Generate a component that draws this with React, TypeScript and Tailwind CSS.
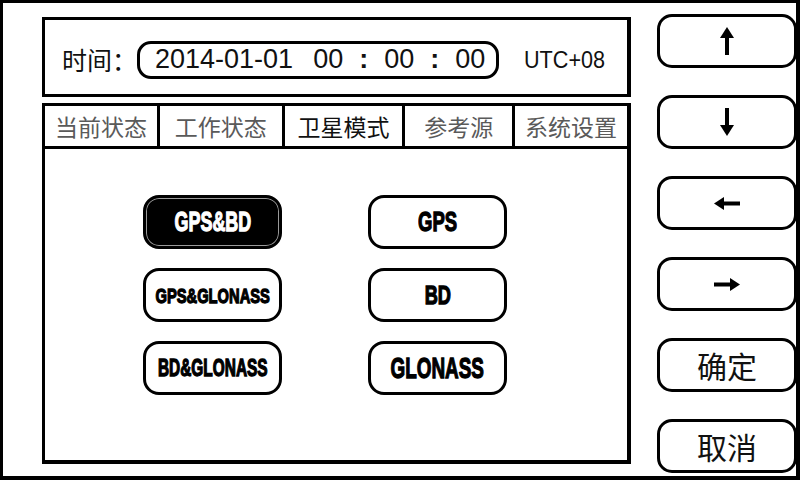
import React from "react";

const tabs = [
  { label: "当前状态", w: "w-[115px] border-r-[3px]", active: false },
  { label: "工作状态", w: "w-[125px] border-r-[3px]", active: false },
  { label: "卫星模式", w: "w-[121px] border-r-[3px]", active: true },
  { label: "参考源", w: "w-[110px] border-r-[3px]", active: false },
  { label: "系统设置", w: "w-[112px]", active: false },
];

const modes = [
  { label: "GPS&BD", cls: "text-[28px] scale-x-[0.64]", active: true },
  { label: "GPS", cls: "text-[28px] scale-x-[0.66]", active: false },
  { label: "GPS&GLONASS", cls: "text-[21px] scale-x-[0.7]", active: false },
  { label: "BD", cls: "text-[26px] scale-x-[0.7]", active: false },
  { label: "BD&GLONASS", cls: "text-[23px] scale-x-[0.67]", active: false },
  { label: "GLONASS", cls: "text-[30px] scale-x-[0.63]", active: false },
];

function ArrowV({ down }: { down?: boolean }) {
  return (
    <svg width="16" height="28" viewBox="0 0 16 28" className={down ? "rotate-180" : ""}>
      <polygon points="8,0 1,11 15,11" fill="#000" />
      <rect x="6" y="9" width="4" height="19" fill="#000" />
    </svg>
  );
}

function ArrowH({ right }: { right?: boolean }) {
  return (
    <svg width="26" height="15" viewBox="0 0 26 15" className={right ? "rotate-180" : ""}>
      <polygon points="0,7.5 10,1 10,14" fill="#000" />
      <rect x="8" y="5.5" width="18" height="4" fill="#000" />
    </svg>
  );
}

function SideButton({ children }: { children: React.ReactNode }) {
  return (
    <div className="h-[54px] w-[140px] rounded-[15px] border-[3px] border-black bg-white flex items-center justify-center">
      {children}
    </div>
  );
}

export default function App() {
  return (
    <div className="w-[800px] h-[480px] bg-white border-l-[3px] border-t-[3px] border-r-[4px] border-b-[4px] border-black box-border flex font-['Noto_Sans_CJK_SC',sans-serif] overflow-hidden">
      {/* Left column */}
      <div className="ml-[39px] mt-[14px] w-[589px] flex flex-col">
        {/* Time panel */}
        <div className="h-[80px] border-[3px] border-r-[4px] border-black flex items-center pl-[17px] pt-[5px]">
          <span className="text-[25px] leading-none text-[#111] w-[75px] whitespace-nowrap">时间：</span>
          <div className="h-[38px] w-[362px] rounded-[14px] border-[3px] border-black flex items-center pl-[15px] font-['Liberation_Sans',sans-serif] text-[27px] leading-none text-[#111]">
            <span>2014-01-01</span>
            <span className="ml-[20px]">00</span>
            <span className="ml-[16px] font-bold">:</span>
            <span className="ml-[16px]">00</span>
            <span className="ml-[16px] font-bold">:</span>
            <span className="ml-[16px]">00</span>
          </div>
          <span className="ml-[25px] inline-block origin-left scale-x-[0.9] font-['Liberation_Sans',sans-serif] text-[24px] leading-none text-[#111]">UTC+08</span>
        </div>

        {/* Tab panel */}
        <div className="mt-[6px] h-[361px] border-[3px] border-r-[4px] border-b-[4px] border-black flex flex-col">
          <div className="h-[43px] border-b-[3px] border-black flex">
            {tabs.map((t) => (
              <div
                key={t.label}
                className={`${t.w} border-black h-full flex items-center justify-center text-[23px] leading-none ${t.active ? "text-[#111]" : "text-[#5a5a5a]"}`}
              >
                {t.label}
              </div>
            ))}
          </div>
          <div className="pt-[46px] pl-[98px] grid grid-cols-[139px_139px] gap-x-[86px] gap-y-[19px]">
            {modes.map((m) => (
              <div
                key={m.label}
                className={`h-[54px] rounded-[16px] border-[3px] border-black flex items-center justify-center ${m.active ? "bg-black shadow-[inset_0_0_0_1px_#9a9a9a]" : "bg-white"}`}
              >
                <span
                  className={`inline-block font-['Liberation_Sans',sans-serif] font-bold leading-none whitespace-nowrap [-webkit-text-stroke:1.3px] ${m.cls} ${m.active ? "text-white" : "text-black"}`}
                >
                  {m.label}
                </span>
              </div>
            ))}
          </div>
        </div>
      </div>

      {/* Right column */}
      <div className="ml-[26px] mt-[11px] flex flex-col gap-[27px]">
        <SideButton>
          <ArrowV />
        </SideButton>
        <SideButton>
          <ArrowV down />
        </SideButton>
        <SideButton>
          <ArrowH />
        </SideButton>
        <SideButton>
          <ArrowH right />
        </SideButton>
        <SideButton>
          <span className="text-[30px] leading-none text-[#111]">确定</span>
        </SideButton>
        <SideButton>
          <span className="text-[30px] leading-none text-[#111]">取消</span>
        </SideButton>
      </div>
    </div>
  );
}
